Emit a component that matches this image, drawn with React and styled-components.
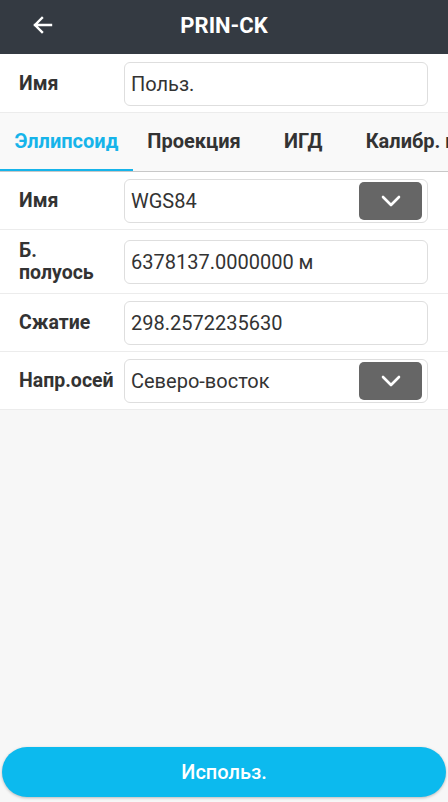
import React from 'react';
import styled, { createGlobalStyle } from 'styled-components';

const GlobalStyle = createGlobalStyle`
  html, body {
    margin: 0;
    padding: 0;
    background: #f7f7f7;
    font-family: Roboto, "Noto Sans", sans-serif;
  }
  * { box-sizing: border-box; }
`;

const Page = styled.div`
  display: flex;
  flex-direction: column;
  min-height: 802px;
  background: #f7f7f7;
`;

const Header = styled.div`
  height: 54px;
  background: #343a42;
  display: flex;
  align-items: center;
  justify-content: center;
  position: relative;
`;

const BackButton = styled.div`
  position: absolute;
  left: 31px;
  top: 13px;
  width: 24px;
  height: 24px;
  display: flex;
`;

const Title = styled.h1`
  margin: 0 0 4px 0;
  color: #fff;
  font-size: 22px;
  font-weight: 700;
`;

const Row = styled.div`
  display: flex;
  align-items: center;
  background: #fff;
  padding: ${(p) => (p.tall ? '10px 20px 9px 19px' : '7px 20px 6px 19px')};
  border-bottom: 1px solid #ececec;
  ${(p) => p.first && 'padding-top: 8px;'}
`;

const Label = styled.div`
  width: 105px;
  flex-shrink: 0;
  font-size: 19.5px;
  font-weight: 700;
  color: #333;
  line-height: 22px;
  white-space: pre-line;
`;

const Field = styled.div`
  flex: 1;
  height: 44px;
  border: 1px solid #dedede;
  border-radius: 6px;
  background: #fff;
  display: flex;
  align-items: center;
  padding: 0 5px 0 6px;
  font-size: 20px;
  color: #333;
`;

const FieldText = styled.span`
  flex: 1;
`;

const DropButton = styled.div`
  width: 63px;
  height: 38px;
  border-radius: 5px;
  background: #666;
  display: flex;
  align-items: center;
  justify-content: center;
`;

const Tabs = styled.div`
  display: flex;
  height: 59px;
  background: #f9f9f9;
  border-bottom: 1px solid #c8c8c8;
  overflow: hidden;
  white-space: nowrap;
`;

const Tab = styled.div`
  min-width: 96px;
  padding: 0 14.5px;
  display: flex;
  align-items: center;
  justify-content: center;
  font-size: 20px;
  font-weight: 700;
  color: ${(p) => (p.active ? '#16b4ea' : '#333')};
  border-bottom: 3px solid ${(p) => (p.active ? '#16b4ea' : 'transparent')};
  margin-bottom: -1px;
  flex-shrink: 0;
`;

const Spacer = styled.div`
  flex: 1;
  background: #f7f7f7;
`;

const Footer = styled.div`
  padding: 0 2px 5px;
  background: #f7f7f7;
`;

const UseButton = styled.button`
  width: 100%;
  height: 50px;
  border: none;
  border-radius: 25px;
  background: #0cbaee;
  color: #fff;
  font-family: Roboto, sans-serif;
  font-size: 20px;
  font-weight: 500;
  box-shadow: 0 1px 3px rgba(0, 0, 0, 0.25);
`;

const Chevron = () => (
  <svg width="20" height="12" viewBox="0 0 20 12">
    <path d="M2 2 L10 10 L18 2" fill="none" stroke="#fff" strokeWidth="2.6" strokeLinecap="round" strokeLinejoin="round" />
  </svg>
);

const ArrowLeft = () => (
  <svg width="24" height="24" viewBox="0 0 24 24">
    <path d="M20 12 H4 M11 5 L4 12 L11 19" fill="none" stroke="#fff" strokeWidth="2.4" strokeLinecap="square" />
  </svg>
);

const fields = [
  { label: 'Имя', value: 'WGS84', select: true },
  { label: 'Б.\nполуось', value: '6378137.0000000 м', tall: true },
  { label: 'Сжатие', value: '298.2572235630' },
  { label: 'Напр.осей', value: 'Северо-восток', select: true },
];

const tabs = ['Эллипсоид', 'Проекция', 'ИГД', 'Калибр. плоскости'];

export default function App() {
  return (
    <Page>
      <GlobalStyle />
      <Header>
        <BackButton><ArrowLeft /></BackButton>
        <Title>PRIN-CK</Title>
      </Header>
      <Row first>
        <Label>Имя</Label>
        <Field><FieldText>Польз.</FieldText></Field>
      </Row>
      <Tabs>
        {tabs.map((t, i) => (
          <Tab key={t} active={i === 0}>{t}</Tab>
        ))}
      </Tabs>
      {fields.map((f) => (
        <Row key={f.label} tall={f.tall}>
          <Label>{f.label}</Label>
          <Field>
            <FieldText>{f.value}</FieldText>
            {f.select && <DropButton><Chevron /></DropButton>}
          </Field>
        </Row>
      ))}
      <Spacer />
      <Footer>
        <UseButton>Использ.</UseButton>
      </Footer>
    </Page>
  );
}
